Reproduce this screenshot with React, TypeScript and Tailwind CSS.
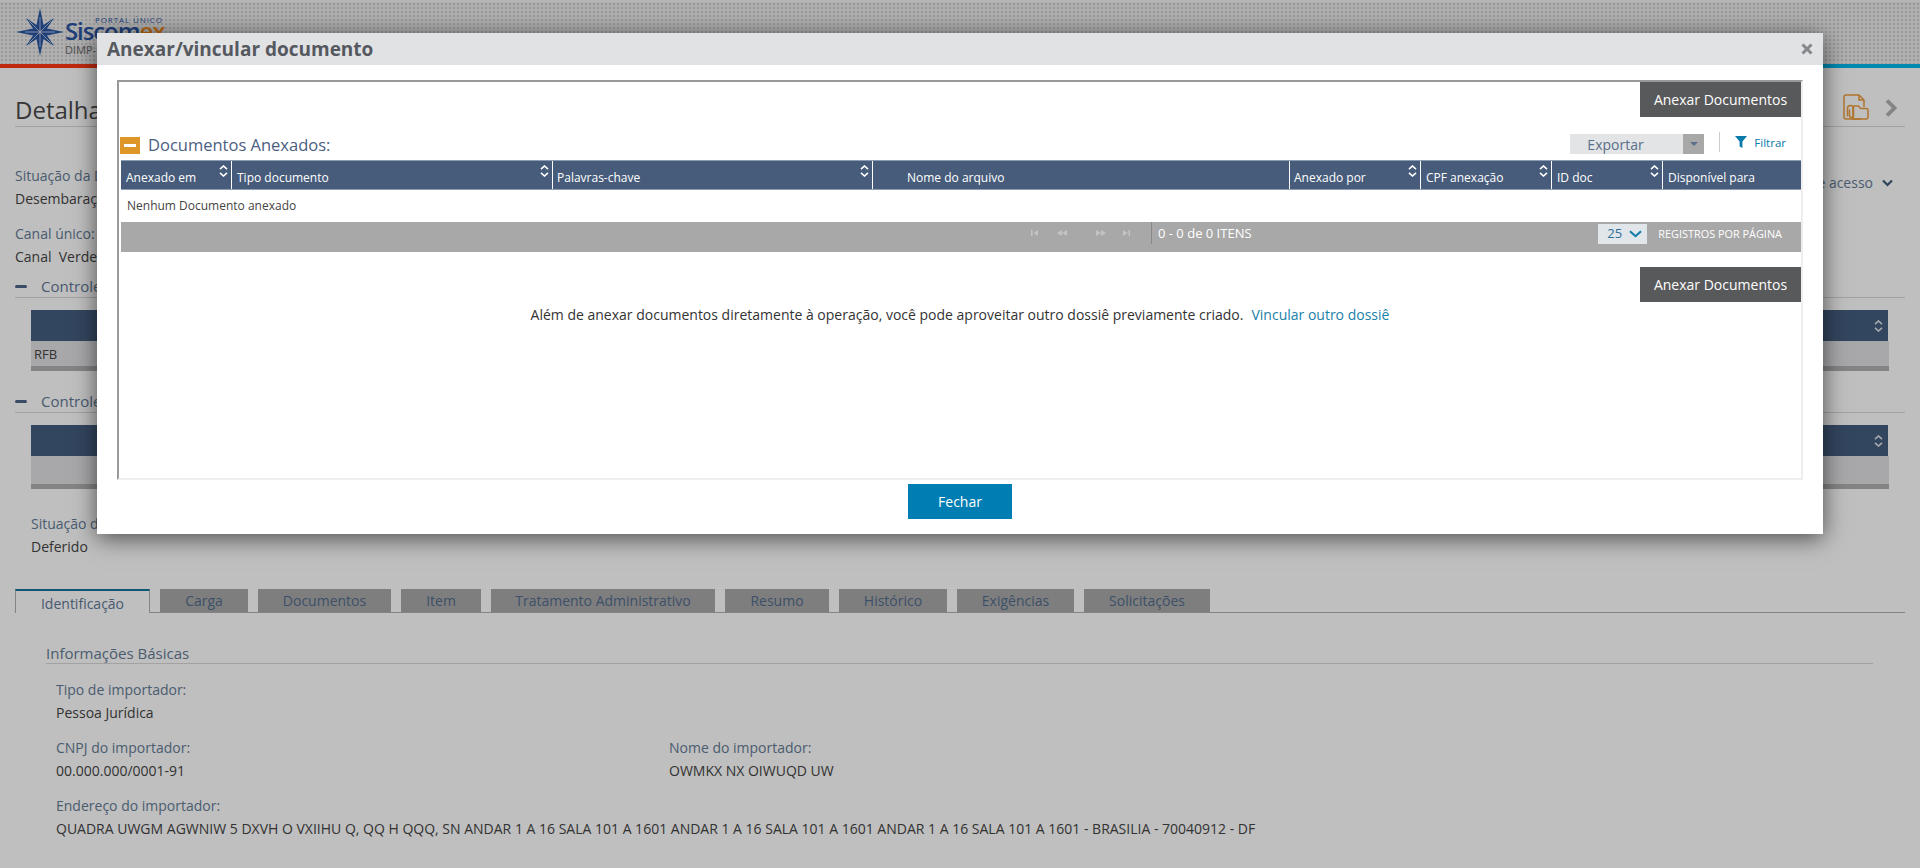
import React from "react";

const columns = [
  { label: "Anexado em", width: "w-[110px]", sort: true },
  { label: "Tipo documento", width: "w-[321px]", sort: true },
  { label: "Palavras-chave", width: "w-[320px]", sort: true, pad: "pl-[4px]" },
  { label: "Nome do arquivo", width: "w-[417px]", sort: false, pad: "pl-[34px]" },
  { label: "Anexado por", width: "w-[131px]", sort: true, pad: "pl-[4px]" },
  { label: "CPF anexação", width: "w-[131px]", sort: true },
  { label: "ID doc", width: "w-[111px]", sort: true },
  { label: "Disponível para", width: "w-[139px]", sort: false },
];

const tabs = [
  { label: "Carga", width: "w-[88px]" },
  { label: "Documentos", width: "w-[133px]" },
  { label: "Item", width: "w-[80px]" },
  { label: "Tratamento Administrativo", width: "w-[224px]" },
  { label: "Resumo", width: "w-[104px]" },
  { label: "Histórico", width: "w-[108px]" },
  { label: "Exigências", width: "w-[117px]" },
  { label: "Solicitações", width: "w-[126px]" },
];

function SortIcon({ className = "" }: { className?: string }) {
  return (
    <svg width="9" height="12" viewBox="0 0 9 12" fill="none" stroke="currentColor" strokeWidth="1.6" className={className}>
      <path d="M1 4.2 4.5 1 8 4.2" />
      <path d="M1 7.8 4.5 11 8 7.8" />
    </svg>
  );
}

function CompassLogo() {
  return (
    <svg width="48" height="48" viewBox="0 0 48 48" className="shrink-0">
      <g fill="#2a55a3">
        <polygon points="24,0 27.5,17 31,20.5 48,24 31,27.5 27.5,31 24,48 20.5,31 17,27.5 0,24 17,20.5 20.5,17" />
        <polygon points="10,10 22,18 18,22" />
        <polygon points="38,10 30,22 26,18" />
        <polygon points="10,38 18,26 22,30" />
        <polygon points="38,38 26,30 30,26" />
      </g>
      <g stroke="#e8e8e8" strokeWidth="0.7">
        <path d="M24 9V39M9 24H39M13 13 35 35M35 13 13 35" />
      </g>
    </svg>
  );
}

function AttachDocIcon() {
  return (
    <svg width="28" height="28" viewBox="0 0 28 28" fill="none" stroke="#eb9c3e" strokeWidth="1.5" className="shrink-0">
      <path d="M19 25H4a2 2 0 0 1-2-2V3a2 2 0 0 1 2-2h13l5 5v7" />
      <path d="M17 1v5h5" />
      <path d="M11 25V13.5a1.5 1.5 0 0 1 1.5-1.5h4l2 2.5h6a1.5 1.5 0 0 1 1.5 1.5v7.5a1.5 1.5 0 0 1-1.5 1.5z" />
      <path d="M7.5 15.5v6a2 2 0 0 0 4 0v-7a3 3 0 0 0-6 0v8" />
    </svg>
  );
}

function PagerIcons() {
  return (
    <div className="flex items-center text-[#c4c4c4]">
      <svg width="8" height="8" viewBox="0 0 8 8" fill="currentColor" className="mr-[18px]">
        <rect x="0" y="1" width="1.5" height="6" />
        <polygon points="7,1 7,7 2.5,4" />
      </svg>
      <svg width="10" height="8" viewBox="0 0 10 8" fill="currentColor" className="mr-[29px]">
        <polygon points="5,1 5,7 0,4" />
        <polygon points="10,1 10,7 5,4" />
      </svg>
      <svg width="10" height="8" viewBox="0 0 10 8" fill="currentColor" className="mr-[16px]">
        <polygon points="0,1 0,7 5,4" />
        <polygon points="5,1 5,7 10,4" />
      </svg>
      <svg width="8" height="8" viewBox="0 0 8 8" fill="currentColor">
        <polygon points="1,1 1,7 5.5,4" />
        <rect x="6.5" y="1" width="1.5" height="6" />
      </svg>
    </div>
  );
}

function AttachButton() {
  return (
    <button className="w-[161px] h-[35px] bg-[#58595b] text-white text-[14px]">
      Anexar Documentos
    </button>
  );
}

function ControlSection({ title, rowText, rowH }: { title: string; rowText: string; rowH: string }) {
  return (
    <div>
      <div className="flex items-center h-[22px] border-b border-[#d9d9d9]">
        <span className="w-[12px] h-[3px] rounded-sm bg-[#4a6485]" />
        <span className="ml-[14px] text-[15px] text-[#5f7896]">{title}</span>
      </div>
      <div className="mt-[12px] ml-[16px] mr-[16px]">
        <div className="h-[31px] mr-px bg-[#445e7f] flex items-center justify-end pr-[5px] text-[#dfe3e8]">
          <SortIcon />
        </div>
        <div className={`${rowH} bg-[#e0e1e4] flex items-center pl-[3px] pt-[3px] text-[13px] text-[#444]`}>{rowText}</div>
        <div className="h-[5px] bg-[#b0b0b0]" />
      </div>
    </div>
  );
}

function Field({ label, value }: { label: string; value: string }) {
  return (
    <div>
      <div className="h-[20px] leading-[20px] text-[#647b95]">{label}</div>
      <div className="mt-[3px] h-[20px] leading-[20px] text-[#444]">{value}</div>
    </div>
  );
}

export default function App() {
  return (
    <div className="relative h-[868px] overflow-hidden bg-white font-['Open_Sans',sans-serif] text-[14px]">
      {/* Header */}
      <header className="h-[68px] border-t-2 border-[#f2f2f2] flex flex-col">
        <div className="flex-1 bg-[#eaeaea] bg-[radial-gradient(#cdcdcd_1px,transparent_1.4px)] bg-[length:4px_4px] flex items-start pl-[16px] pt-[6px]">
          <CompassLogo />
          <div className="ml-[1px] w-[110px]">
            <div className="mt-[8px] pl-[30px] text-[8px] leading-[8px] tracking-[0.9px] text-[#2a55a3] whitespace-nowrap">PORTAL ÚNICO</div>
            <div className="mt-[1px] text-[24px] leading-[12px] font-semibold tracking-[-1.1px] text-[#2a55a3] whitespace-nowrap">
              Siscom<span className="text-[#f08a1d]">ex</span>
            </div>
            <div className="mt-[6px] text-[11px] leading-[14px] text-[#6b6b6b]">DIMP-</div>
          </div>
        </div>
        <div className="h-[4px] bg-[linear-gradient(90deg,#ff3915_0%,#ff3915_50%,#00b7eb_50%,#00b7eb_100%)]" />
      </header>

      {/* Page behind the dialog */}
      <main className="px-[15px]">
        <div className="h-[59px] border-b border-[#d9d9d9] flex items-center justify-between pt-[26px]">
          <h1 className="text-[24px] leading-[32px] text-[#4a4a4a]">Detalhamento da Duimp</h1>
          <div className="flex items-center mr-[8px] gap-[15px] -mt-[4px]">
            <AttachDocIcon />
            <svg width="12" height="18" viewBox="0 0 12 18" fill="none" stroke="#b0b0b0" strokeWidth="3.8">
              <path d="M2 1.5 9.5 9 2 16.5" />
            </svg>
          </div>
        </div>

        <div className="mt-[39px] flex justify-between items-start">
          <div>
            <div className="h-[20px] leading-[20px] text-[#647b95]">Situação da Duimp:</div>
            <div className="mt-[3px] h-[20px] leading-[20px] text-[#444]">Desembaraçada</div>
            <div className="mt-[15px] h-[20px] leading-[20px] text-[#647b95]">Canal único:</div>
            <div className="mt-[3px] h-[20px] leading-[20px] text-[#444]">Canal&nbsp; Verde</div>
          </div>
          <div className="flex items-center gap-[9px] mr-[12px] mt-[6px] text-[#647b95]">
            <span>Dados de acesso</span>
            <svg width="11" height="8" viewBox="0 0 11 8" fill="none" stroke="#3f5a7c" strokeWidth="2.2">
              <path d="M1 1.5 5.5 6 10 1.5" />
            </svg>
          </div>
        </div>

        <div className="mt-[9px]">
          <ControlSection title="Controles" rowText="RFB" rowH="h-[25px]" />
        </div>
        <div className="mt-[20px]">
          <ControlSection title="Controles" rowText="" rowH="h-[28px]" />
        </div>

        <div className="mt-[25px] ml-[16px]">
          <Field label="Situação da Duimp:" value="Deferido" />
        </div>

        {/* Tabs */}
        <div className="mt-[32px] h-[24px] border-b border-[#b0b0b0] flex items-start gap-[10px]">
          <div className="w-[135px] h-[24px] border-t-2 border-x border-t-[#14739c] border-x-[#b0b0b0] bg-white text-center leading-[26px] text-[#5f7896]">
            Identificação
          </div>
          {tabs.map((tab) => (
            <div key={tab.label} className={`${tab.width} h-[23px] bg-[#a9a9a9] text-center leading-[23px] text-[#526b8c]`}>
              {tab.label}
            </div>
          ))}
        </div>

        <div className="mt-[30px] ml-[31px] mr-[32px] h-[21px] border-b border-[#d9d9d9] text-[15px] leading-[20px] text-[#647b95]">
          Informações Básicas
        </div>
        <div className="mt-[16px] ml-[41px] grid grid-cols-[613px_1fr] gap-y-[15px]">
          <div className="col-span-2">
            <Field label="Tipo de importador:" value="Pessoa Jurídica" />
          </div>
          <Field label="CNPJ do importador:" value="00.000.000/0001-91" />
          <Field label="Nome do importador:" value="OWMKX NX OIWUQD UW" />
          <div className="col-span-2">
            <Field
              label="Endereço do importador:"
              value="QUADRA UWGM AGWNIW 5 DXVH O VXIIHU Q, QQ H QQQ, SN ANDAR 1 A 16 SALA 101 A 1601 ANDAR 1 A 16 SALA 101 A 1601 ANDAR 1 A 16 SALA 101 A 1601 - BRASILIA - 70040912 - DF"
            />
          </div>
        </div>
      </main>

      {/* Dim layer */}
      <div className="absolute inset-0 bg-black/25" />

      {/* Dialog */}
      <div className="absolute left-[97px] top-[33px] w-[1726px] h-[501px] bg-white shadow-[0_4px_22px_rgba(0,0,0,0.6)] flex flex-col">
        <div className="h-[32px] bg-[#e1e2e4] flex items-center justify-between pl-[10px] pr-[10px]">
          <h2 className="text-[19px] font-bold text-[#55595f]">Anexar/vincular documento</h2>
          <svg width="12" height="12" viewBox="0 0 12 12" fill="none" stroke="#85888c" strokeWidth="3">
            <path d="M1.5 1.5 10.5 10.5M10.5 1.5 1.5 10.5" />
          </svg>
        </div>

        <div className="mt-[15px] mx-[20px] h-[400px] border-t-2 border-l-2 border-t-[#999] border-l-[#999] border-r-2 border-b-2 border-r-[#eee] border-b-[#eee] flex flex-col">
          <div className="flex justify-end">
            <AttachButton />
          </div>

          <div className="mt-[15px] h-[28px] flex items-start pl-px">
            <div className="mt-[5px] w-[20px] h-[17px] bg-[#de9726] flex items-center justify-center">
              <span className="w-[12px] h-[3px] bg-white" />
            </div>
            <span className="ml-[8px] mt-[2px] text-[16.5px] leading-[22px] text-[#4a607f] whitespace-nowrap">Documentos Anexados:</span>
            <div className="ml-auto flex items-start">
              <div className="mt-[2px] w-[134px] h-[20px] bg-[#e2e4e6] flex">
                <span className="flex-1 pl-[17px] leading-[21px] text-[#5a6f8a]">Exportar</span>
                <span className="w-[21px] h-[20px] bg-[#a8a8a8] flex items-center justify-center">
                  <span className="border-x-[4px] border-t-[4px] border-x-transparent border-t-[#5a6f8a]" />
                </span>
              </div>
              <span className="ml-[15px] w-px h-[20px] bg-[#ccc]" />
              <div className="ml-[15px] mr-[15px] mt-[3px] flex items-center h-[14px] gap-[7px]">
                <svg width="12" height="12" viewBox="0 0 12 12" fill="#0a7aaa">
                  <path d="M0 0H12L7.4 5.6V12L4.6 10.4V5.6Z" />
                </svg>
                <span className="text-[11.5px] leading-[14px] text-[#0a7aaa] mt-[1px]">Filtrar</span>
              </div>
            </div>
          </div>

          {/* Table */}
          <div className="ml-[2px]">
            <div className="h-[30px] bg-[#475c7b] border-y border-[#8c9cb2] flex">
              {columns.map((col, i) => (
                <div
                  key={col.label}
                  className={`${col.width} relative flex items-end pb-[1px] text-[12px] leading-[20px] text-white ${i > 0 ? "border-l border-white" : ""} ${col.pad ?? "pl-[5px]"}`}
                >
                  {col.label}
                  {col.sort && <SortIcon className="absolute right-[3px] top-[4px]" />}
                </div>
              ))}
            </div>
            <div className="h-[32px] flex items-center pl-[6px] text-[12px] text-[#444]">Nenhum Documento anexado</div>
            <div className="h-[30px] bg-[#a8a8a8] flex items-start text-white">
              <div className="ml-[910px] h-[22px] flex items-center">
                <PagerIcons />
              </div>
              <span className="ml-[21px] w-px h-[22px] bg-[#888]" />
              <span className="ml-[6px] text-[13px] leading-[22px]">0 - 0 de 0 ITENS</span>
              <div className="ml-auto mt-[2px] w-[49px] h-[20px] bg-[#e1e6ea] flex items-center justify-between pl-[9px] pr-[5px] text-[13px] text-[#2f6f99]">
                25
                <svg width="13" height="8" viewBox="0 0 13 8" fill="none" stroke="#0a7aaa" strokeWidth="2">
                  <path d="M1 1.2 6.5 6.2 12 1.2" />
                </svg>
              </div>
              <span className="ml-[11px] mr-[19px] mt-[1px] text-[10.9px] leading-[22px] font-medium">REGISTROS POR PÁGINA</span>
            </div>
          </div>

          <div className="mt-[15px] flex justify-end">
            <AttachButton />
          </div>
          <p className="mt-[3px] text-center leading-[20px] text-[#333]">
            Além de anexar documentos diretamente à operação, você pode aproveitar outro dossiê previamente criado.
            <a className="ml-[8px] text-[#1a7fa8]">Vincular outro dossiê</a>
          </p>
        </div>

        <div className="mt-[4px] flex justify-center">
          <button className="w-[104px] h-[35px] bg-[#007db2] text-white">Fechar</button>
        </div>
      </div>
    </div>
  );
}
